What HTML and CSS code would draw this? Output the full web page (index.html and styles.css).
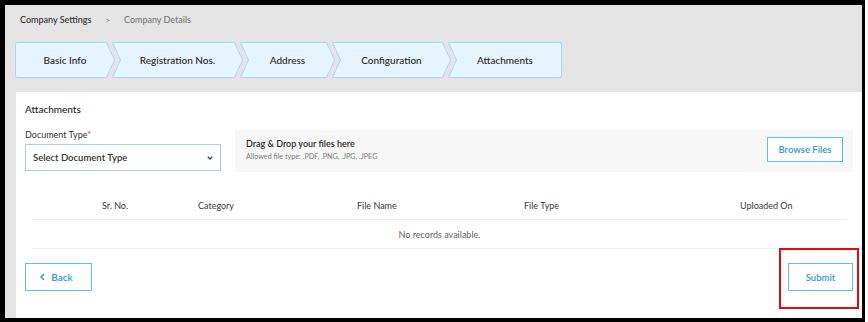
FILE: index.html
```html
<!DOCTYPE html>
<html lang="en">
<head>
<meta charset="utf-8">
<title>Company Details - Attachments</title>
<link rel="stylesheet" href="styles.css">
</head>
<body>
<div class="frame">
  <div class="page">
    <nav class="crumbs">
      <span class="crumb-root">Company Settings</span>
      <span class="crumb-sep">&gt;</span>
      <span class="crumb-current">Company Details</span>
    </nav>

    <div class="steps">
      <div class="step step-1">
        <svg viewBox="0 0 100 36" width="100" height="36"><path d="M2.5 0.5 H91.5 L99.5 18 L91.5 35.5 H2.5 Q0.5 35.5 0.5 33.5 V2.5 Q0.5 0.5 2.5 0.5 Z"/></svg>
        <span>Basic Info</span>
      </div>
      <div class="step step-2">
        <svg viewBox="0 0 131 36" width="131" height="36"><path d="M0.5 0.5 H122.5 L130.5 18 L122.5 35.5 H0.5 L8.5 18 Z"/></svg>
        <span>Registration Nos.</span>
      </div>
      <div class="step step-3">
        <svg viewBox="0 0 95 36" width="95" height="36"><path d="M0.5 0.5 H86.5 L94.5 18 L86.5 35.5 H0.5 L8.5 18 Z"/></svg>
        <span>Address</span>
      </div>
      <div class="step step-4">
        <svg viewBox="0 0 119 36" width="119" height="36"><path d="M0.5 0.5 H110.5 L118.5 18 L110.5 35.5 H0.5 L8.5 18 Z"/></svg>
        <span>Configuration</span>
      </div>
      <div class="step step-5">
        <svg viewBox="0 0 114 36" width="114" height="36"><path d="M0.5 0.5 H111.5 Q113.5 0.5 113.5 2.5 V33.5 Q113.5 35.5 111.5 35.5 H0.5 L8.5 18 Z"/></svg>
        <span>Attachments</span>
      </div>
    </div>

    <section class="card">
      <h2 class="card-title">Attachments</h2>

      <div class="upload-row">
        <div class="doc-type">
          <label class="field-label">Document Type<span class="req">*</span></label>
          <div class="select">
            <span>Select Document Type</span>
            <svg class="chev" viewBox="0 0 6 4" width="6" height="4"><path d="M0.8 0.8 L3 3 L5.2 0.8"/></svg>
          </div>
        </div>
        <div class="dropzone">
          <div class="drop-text">
            <div class="drop-title">Drag &amp; Drop your files here</div>
            <div class="drop-hint">Allowed file type: .PDF, .PNG, .JPG, .JPEG</div>
          </div>
          <button class="btn btn-browse">Browse Files</button>
        </div>
      </div>

      <div class="table">
        <div class="trow thead">
          <div class="c c1">Sr. No.</div>
          <div class="c c2">Category</div>
          <div class="c c3">File Name</div>
          <div class="c c4">File Type</div>
          <div class="c c5">Uploaded On</div>
        </div>
        <div class="trow tempty">No records available.</div>
      </div>

      <div class="actions">
        <button class="btn btn-back">
          <svg viewBox="0 0 5 8" width="5" height="8"><path d="M4 1 L1 4 L4 7"/></svg>
          <span>Back</span>
        </button>
        <div class="submit-wrap">
          <button class="btn btn-submit">Submit</button>
          <span class="highlight"></span>
        </div>
      </div>
    </section>
  </div>
</div>
</body>
</html>
```

FILE: styles.css
```css
* {
  box-sizing: border-box;
  margin: 0;
  padding: 0;
}

body {
  width: 868px;
  height: 322px;
  background: #ffffff;
  font-family: Lato, "Open Sans", sans-serif;
  color: #333333;
  overflow: hidden;
}

.frame {
  width: 865px;
  height: 322px;
  border-style: solid;
  border-color: #000000;
  border-width: 5px 3px 4px 5px;
}

.page {
  height: 100%;
  background: #e4e4e4;
  padding: 9px 0 0 10px;
  display: flex;
  flex-direction: column;
}

/* breadcrumbs */
.crumbs {
  display: flex;
  align-items: center;
  gap: 14px;
  padding-left: 5px;
  font-size: 9px;
  line-height: 12px;
}

.crumb-root {
  color: #2e2e2e;
  font-weight: 500;
}

.crumb-sep {
  color: #666666;
  font-size: 8px;
}

.crumb-current {
  color: #707070;
}

/* stepper */
.steps {
  display: flex;
  height: 36px;
  margin-top: 16px;
}

.step {
  position: relative;
  height: 36px;
  display: flex;
  align-items: center;
  justify-content: center;
  font-size: 10px;
  font-weight: 500;
  color: #262626;
}

.step + .step {
  margin-left: -3px;
}

.step svg {
  position: absolute;
  left: 0;
  top: 0;
}

.step svg path {
  fill: #e6f4fe;
  stroke: #a9d6f3;
  stroke-width: 1;
}

.step span {
  position: relative;
}

.step-1 { width: 100px; }
.step-2 { width: 131px; }
.step-3 { width: 95px; }
.step-4 { width: 119px; }
.step-5 { width: 114px; }

/* card */
.card {
  flex: 1;
  margin: 14px 0 0 1px;
  background: #ffffff;
  padding: 11px 9px 0 9px;
  display: flex;
  flex-direction: column;
}

.card-title {
  font-size: 10px;
  line-height: 12px;
  font-weight: 500;
  color: #262626;
}

.upload-row {
  display: flex;
  align-items: flex-start;
  gap: 14px;
  margin-top: 15px;
}

.doc-type {
  width: 196px;
  flex: none;
}

.field-label {
  display: block;
  font-size: 9px;
  line-height: 12px;
  color: #333333;
  margin-top: -1px;
}

.req {
  color: #e0303a;
}

.select {
  margin-top: 3px;
  height: 27px;
  border: 1px solid #a9cde6;
  display: flex;
  align-items: center;
  justify-content: space-between;
  padding: 0 7px 0 7px;
  font-size: 9.5px;
  font-weight: 600;
  color: #333333;
}

.chev path {
  fill: none;
  stroke: #444444;
  stroke-width: 1.3;
}

.dropzone {
  flex: 1;
  height: 42px;
  background: #f7f7f7;
  display: flex;
  align-items: center;
  justify-content: space-between;
  padding: 0 10px 0 11px;
}

.drop-text {
  margin-top: -2px;
}

.drop-title {
  font-size: 9px;
  line-height: 12px;
  font-weight: 600;
  color: #2b2b2b;
}

.drop-hint {
  margin-top: 2px;
  font-size: 7.2px;
  line-height: 10px;
  color: #777777;
}

.btn {
  font-family: inherit;
  background: #ffffff;
  border: 1px solid #5cc2ec;
  color: #3796da;
  font-weight: 600;
  cursor: pointer;
  display: flex;
  align-items: center;
  justify-content: center;
}

.btn-browse {
  width: 76px;
  height: 25px;
  font-size: 9.5px;
  margin-top: -3px;
}

/* table */
.table {
  margin: 19px 6px 0 7px;
}

.trow {
  border-bottom: 1px solid #eeeeee;
}

.thead {
  display: grid;
  grid-template-columns: 166px 159px 167px 216px 1fr;
  height: 29px;
  align-items: center;
  font-size: 9px;
  color: #3a3a3a;
}

.c1 { padding-left: 70px; }

.tempty {
  height: 29px;
  display: flex;
  align-items: center;
  justify-content: center;
  font-size: 9px;
  color: #666666;
}

/* actions */
.actions {
  display: flex;
  justify-content: space-between;
  align-items: flex-start;
  margin-top: 14px;
}

.btn-back {
  width: 67px;
  height: 28px;
  font-size: 10px;
  gap: 6px;
  padding-right: 4px;
}

.btn-back svg path {
  fill: none;
  stroke: #3796da;
  stroke-width: 1.5;
}

.submit-wrap {
  position: relative;
}

.btn-submit {
  width: 65px;
  height: 28px;
  font-size: 9.5px;
}

.highlight {
  position: absolute;
  left: -9px;
  top: -15px;
  right: -6px;
  bottom: -18px;
  border: 2px solid #e8070b;
  pointer-events: none;
}
```
